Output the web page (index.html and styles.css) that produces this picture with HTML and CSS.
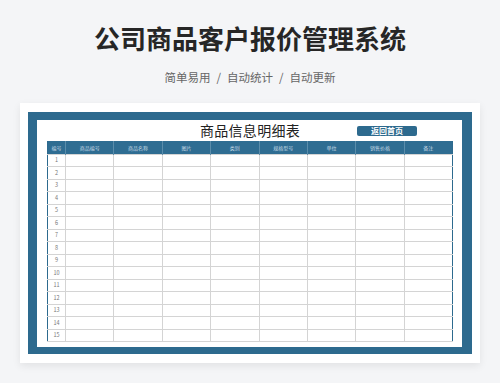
FILE: index.html
```html
<!DOCTYPE html>
<html lang="zh">
<head>
<meta charset="utf-8">
<link rel="stylesheet" href="styles.css">
</head>
<body>
<h1 class="title">公司商品客户报价管理系统</h1>
<p class="subtitle">简单易用<span class="sep">/</span>自动统计<span class="sep">/</span>自动更新</p>
<div class="card">
  <div class="frame">
    <div class="sheet">
      <div class="sheet-head">
        <div class="sheet-title">商品信息明细表</div>
        <div class="back-btn">返回首页</div>
      </div>
      <table class="grid">
        <colgroup>
          <col class="c-no"><col><col><col><col><col><col><col><col>
        </colgroup>
        <thead>
          <tr><th>编号</th><th>商品编号</th><th>商品名称</th><th>图片</th><th>类别</th><th>规格型号</th><th>单位</th><th>销售价格</th><th>备注</th></tr>
        </thead>
        <tbody>
          <tr><td>1</td><td></td><td></td><td></td><td></td><td></td><td></td><td></td><td></td></tr>
          <tr><td>2</td><td></td><td></td><td></td><td></td><td></td><td></td><td></td><td></td></tr>
          <tr><td>3</td><td></td><td></td><td></td><td></td><td></td><td></td><td></td><td></td></tr>
          <tr><td>4</td><td></td><td></td><td></td><td></td><td></td><td></td><td></td><td></td></tr>
          <tr><td>5</td><td></td><td></td><td></td><td></td><td></td><td></td><td></td><td></td></tr>
          <tr><td>6</td><td></td><td></td><td></td><td></td><td></td><td></td><td></td><td></td></tr>
          <tr><td>7</td><td></td><td></td><td></td><td></td><td></td><td></td><td></td><td></td></tr>
          <tr><td>8</td><td></td><td></td><td></td><td></td><td></td><td></td><td></td><td></td></tr>
          <tr><td>9</td><td></td><td></td><td></td><td></td><td></td><td></td><td></td><td></td></tr>
          <tr><td>10</td><td></td><td></td><td></td><td></td><td></td><td></td><td></td><td></td></tr>
          <tr><td>11</td><td></td><td></td><td></td><td></td><td></td><td></td><td></td><td></td></tr>
          <tr><td>12</td><td></td><td></td><td></td><td></td><td></td><td></td><td></td><td></td></tr>
          <tr><td>13</td><td></td><td></td><td></td><td></td><td></td><td></td><td></td><td></td></tr>
          <tr><td>14</td><td></td><td></td><td></td><td></td><td></td><td></td><td></td><td></td></tr>
          <tr><td>15</td><td></td><td></td><td></td><td></td><td></td><td></td><td></td><td></td></tr>
        </tbody>
      </table>
    </div>
  </div>
</div>
</body>
</html>
```

FILE: styles.css
```css
* { box-sizing: border-box; }
html, body { margin: 0; padding: 0; }
body {
  width: 500px;
  height: 383px;
  overflow: hidden;
  background: #f4f5f7;
  font-family: "Noto Sans CJK SC", "Noto Sans", sans-serif;
}
.title {
  margin: 0;
  padding-top: 20px;
  font-size: 26px;
  line-height: 36px;
  font-weight: 700;
  color: #262626;
  text-align: center;
}
.subtitle {
  margin: 13px 0 0;
  font-size: 11.5px;
  line-height: 16px;
  color: #666;
  text-align: center;
}
.sep {
  display: inline-block;
  margin: 0 6px;
}
.card {
  margin: 18px 20px 0;
  height: 260px;
  padding: 9px 8px;
  background: #fff;
  box-shadow: 0 3px 8px rgba(0,0,0,0.08);
}
.frame {
  height: 100%;
  background: #2d6a8e;
  padding: 8px 10px 7px 9px;
}
.sheet {
  height: 100%;
  background: #fff;
  padding: 0 9px 5px 10px;
  display: flex;
  flex-direction: column;
}
.sheet-head {
  height: 21px;
  display: grid;
  grid-template-columns: 1fr auto 1fr;
  align-items: start;
}
.sheet-title {
  grid-column: 2;
  font-size: 14px;
  line-height: 18px;
  margin-top: 1px;
  color: #222;
  font-weight: 400;
  letter-spacing: 0.3px;
}
.back-btn {
  grid-column: 3;
  justify-self: start;
  margin-left: 57px;
  margin-top: 6px;
  width: 60px;
  height: 10px;
  background: #2d6a8e;
  border-radius: 2px;
  color: #fff;
  font-size: 8px;
  line-height: 10px;
  font-weight: 700;
  text-align: center;
}
.grid {
  width: 406px;
  border-collapse: collapse;
  table-layout: fixed;
  border-left: 1.5px solid #2d6a8e;
  border-right: 1.5px solid #2d6a8e;
}
.c-no { width: 18px; }
.grid th {
  height: 13px;
  padding: 0;
  background: #2f6d92;
  color: #c9dbe6;
  font-size: 5px;
  line-height: 13px;
  font-weight: 400;
  border-left: 1px solid #5b8dab;
  text-align: center;
}
.grid th:first-child { border-left: none; }
.grid td {
  height: 12.5px;
  padding: 0;
  border: 1px solid #d4d4d4;
  font-size: 5.5px;
  line-height: 10px;
  color: #777;
  text-align: center;
}
.grid td:first-child { border-left: none; }
.grid td:last-child { border-right: none; }
```
